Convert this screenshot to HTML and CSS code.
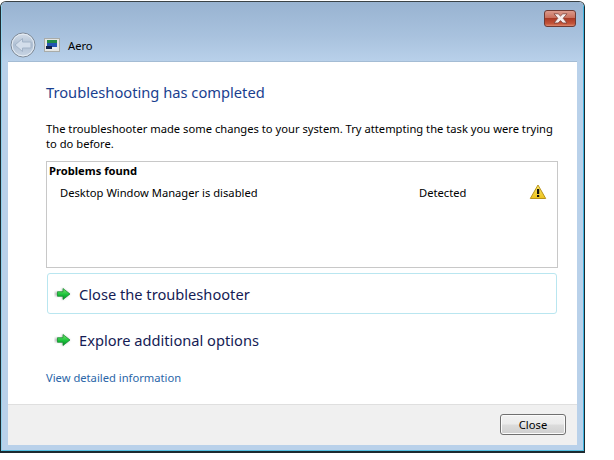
FILE: index.html
```html
<!DOCTYPE html>
<html lang="en">
<head>
<meta charset="utf-8">
<title>Aero</title>
<link rel="stylesheet" href="styles.css">
</head>
<body>
<div class="window">
  <div class="frame">
    <header class="titlebar">
      <div class="caption">
        <div class="close-x">
          <svg width="17" height="11" viewBox="0 0 17 11"><path d="M2 .8H6.200L8.500 3 10.800 .8H15L11.200 5.300 15 10H10.800L8.500 7.600 6.200 10H2L5.800 5.300Z" fill="#f6eeee" stroke="#7a4038" stroke-width=".8"/></svg>
        </div>
      </div>
      <div class="nav">
        <div class="back">
          <svg width="26" height="26" viewBox="0 0 26 26">
            <defs>
              <linearGradient id="bk" x1="0" y1="0" x2="0" y2="1"><stop offset="0" stop-color="#d6dfea"/><stop offset="0.5" stop-color="#aebfd3"/><stop offset="1" stop-color="#cbd7e5"/></linearGradient>
            </defs>
            <circle cx="13" cy="13" r="12" fill="url(#bk)" stroke="#7f8a97" stroke-width="1"/>
            <circle cx="13" cy="13" r="10.900" fill="none" stroke="#e6edf4" stroke-width="1"/>
            <path d="M5 13L12.500 6.500V10H21V16H12.500V19.500Z" fill="#d3deeb" stroke="#a3b4c8" stroke-width="1" stroke-linejoin="round"/>
          </svg>
        </div>
        <svg class="app-icon" width="16" height="14" viewBox="0 0 16 14">
          <rect x="0.500" y="0.500" width="15" height="13" fill="#e4e6e4" stroke="#a9aca9"/>
          <rect x="3" y="2" width="10" height="3" fill="#1f8a45"/>
          <rect x="3" y="5" width="10" height="4" fill="#2254b0"/>
          <rect x="2" y="8" width="6" height="3" fill="#12224a"/>
          <rect x="8" y="9" width="5" height="2" fill="#e8ecf0"/>
        </svg>
        <span class="app-title">Aero</span>
      </div>
    </header>
    <main class="content">
      <div class="body">
        <h1 class="heading">Troubleshooting has completed</h1>
        <p class="intro">The troubleshooter made some changes to your system. Try attempting the task you were trying to do before.</p>
        <section class="problems">
          <h2 class="problems-title">Problems found</h2>
          <div class="problem-row">
            <span class="problem-name">Desktop Window Manager is disabled</span>
            <span class="problem-status">Detected</span>
            <svg class="warn" width="18" height="16" viewBox="0 0 18 16">
              <defs><linearGradient id="wg" x1="0" y1="0" x2="0" y2="1"><stop offset="0" stop-color="#fbe96a"/><stop offset="1" stop-color="#eec21b"/></linearGradient></defs>
              <path d="M9 1L16.700 14.500H1.300Z" fill="url(#wg)" stroke="#b8931a" stroke-width="1" stroke-linejoin="round"/>
              <rect x="8" y="5" width="2.200" height="5" fill="#111"/>
              <rect x="8" y="11" width="2.200" height="2" fill="#111"/>
            </svg>
          </div>
        </section>
        <div class="cmd cmd-active">
          <svg class="arrow" width="18" height="14" viewBox="0 0 18 14"><use href="#arrow"/></svg>
          <span>Close the troubleshooter</span>
        </div>
        <div class="cmd">
          <svg class="arrow" width="18" height="14" viewBox="0 0 18 14"><use href="#arrow"/></svg>
          <span>Explore additional options</span>
        </div>
        <a class="details" href="#">View detailed information</a>
      </div>
      <footer class="footer">
        <button class="btn" type="button">Close</button>
      </footer>
    </main>
  </div>
</div>
<svg width="0" height="0" class="defs">
  <defs>
    <linearGradient id="ag" x1="0" y1="0" x2="0" y2="1"><stop offset="0" stop-color="#7be86f"/><stop offset="0.55" stop-color="#1cc23c"/><stop offset="1" stop-color="#0a8f2a"/></linearGradient>
    <filter id="ab" x="-20%" y="-20%" width="140%" height="140%"><feGaussianBlur stdDeviation="1"/></filter>
    <g id="arrow">
      <path d="M1 5H8V1L16 7 8 13V9H1Z" fill="#777" opacity=".55" filter="url(#ab)"/>
      <path d="M3.500 4.700H9V1.500L16 7 9 12.500V9.300H3.500Z" fill="url(#ag)" stroke="#0c8a2a" stroke-width=".7" stroke-linejoin="round"/>
    </g>
  </defs>
</svg>
</body>
</html>
```
FILE: styles.css
```css
* { box-sizing: border-box; }
html, body { margin: 0; height: 100%; background: #fff; overflow: hidden; }
body { font-family: "Noto Sans", "Open Sans", sans-serif; font-size: 11.200px; color: #000; }
.defs { position: absolute; }
.window {
  width: 585px;
  height: 452px;
  margin-top: 1px;
  border: 1px solid #1c2a30;
  border-top-color: #3a4246;
  border-bottom-width: 2px;
  border-radius: 6px 6px 0 0;
  overflow: hidden;
}
.frame {
  height: 100%;
  display: flex;
  flex-direction: column;
  padding: 0 6px 5px 6px;
  border-left: 1px solid #8fd0ea;
  border-right: 1px solid #3fb4e0;
  border-bottom: 1px solid #55bfe0;
  background: linear-gradient(#98b3d1 0, #a9c2de 35px, #b9d1ea 60px);
}
.titlebar { height: 59px; flex: none; }
.caption { display: flex; justify-content: flex-end; padding: 8px 1px 0 0; height: 30px; }
.close-x {
  width: 32px;
  height: 17px;
  display: flex;
  align-items: center;
  justify-content: center;
  border: 1px solid #6e3a34;
  border-radius: 3px;
  background: linear-gradient(#dc9a8c 0, #c9705e 45%, #aa3a26 50%, #c4553a 85%, #dd8a70 100%);
}
.nav { display: flex; align-items: center; height: 26px; margin-top: 0; padding-left: 2px; }
.back { width: 26px; height: 26px; }
.app-icon { margin-left: 8px; }
.app-title { margin-left: 8px; color: #000; }
.content { flex: 1; display: flex; flex-direction: column; background: #fff; min-height: 0; border-top: 1px solid #a4bcd4; }
.body { flex: 1; display: flex; flex-direction: column; padding: 0 19px 0 38px; min-height: 0; }
.heading { margin: 19px 0 0; font-size: 14.700px; line-height: 22px; font-weight: 400; color: #1a3f8f; }
.intro { margin: 18px 0 0; line-height: 15px; }
.problems { margin-top: 10px; width: 512px; height: 107px; border: 1px solid #c8c8c8; padding: 0 2px; }
.problems-title { margin: 1px 0 0; font-size: 11.200px; line-height: 15px; font-weight: 700; }
.problem-row { display: flex; align-items: center; height: 22px; margin-top: 3px; padding-left: 11px; }
.problem-name { width: 359px; }
.problem-status { width: 110px; }
.warn { margin-top: 0; }
.cmd {
  display: flex;
  align-items: center;
  width: 510px;
  height: 41px;
  margin-left: 1px;
  padding-left: 6px;
  border: 1px solid transparent;
  border-radius: 3px;
  font-size: 14.650px;
  color: #151c55;
}
.cmd-active { margin-top: 5px; border-color: #b9e6f0; }
.cmd + .cmd { margin-top: 5px; }
.arrow { margin-right: 7px; flex: none; }
.details { margin-top: 10px; line-height: 16px; color: #2a66a8; text-decoration: none; }
.footer {
  flex: none;
  height: 41px;
  display: flex;
  justify-content: flex-end;
  align-items: flex-start;
  padding: 9px 11px 0 0;
  background: #f0f0f0;
  border-top: 1px solid #dfdfdf;
}
.btn {
  width: 66px;
  height: 21px;
  padding: 0;
  border: 1px solid #707070;
  border-radius: 3px;
  background: linear-gradient(#f2f2f2 0, #ebebeb 48%, #dcdcdc 52%, #cfcfcf 100%);
  box-shadow: inset 0 0 0 1px #fbfbfb;
  font: 11.200px "Noto Sans", "Open Sans", sans-serif;
  color: #000;
}
```
